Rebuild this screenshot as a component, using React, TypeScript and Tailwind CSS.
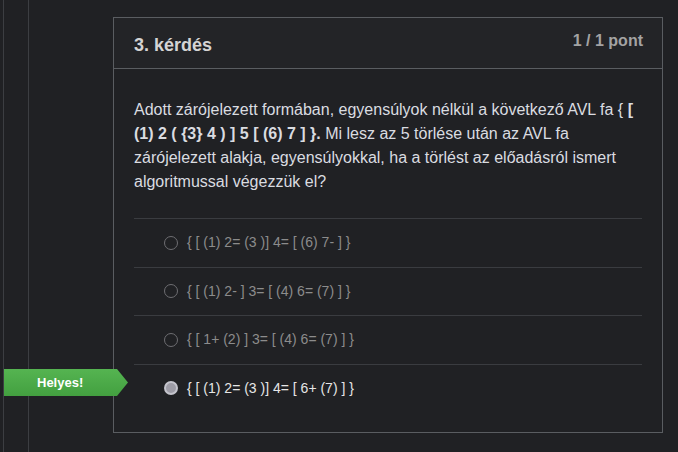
import React from "react";

const options = [
  { text: "{ [ (1) 2= (3 )] 4= [ (6) 7- ] }", selected: false },
  { text: "{ [ (1) 2- ] 3= [ (4) 6= (7) ] }", selected: false },
  { text: "{ [ 1+ (2) ] 3= [ (4) 6= (7) ] }", selected: false },
  { text: "{ [ (1) 2= (3 )] 4= [ 6+ (7) ] }", selected: true },
];

export default function App() {
  return (
    <div
      className="relative h-[452px] w-[678px] overflow-hidden bg-[#202124] flex"
      style={{ fontFamily: '"Liberation Sans", Arial, sans-serif' }}
    >
      <div className="w-[3px] shrink-0" />
      <div className="w-[25px] shrink-0 border-l border-[#3c3e42]" />
      <div className="flex-1 border-l border-[#3c3e42] pl-[84px] pt-[17px]">
        <div className="w-[550px] h-[416px] border border-[#5a5d61] flex flex-col">
          <div className="h-[51px] shrink-0 bg-[#232427] border-b border-[#5a5d61] flex items-center justify-between pl-[20px] pr-[19px]">
            <div className="text-[18px] font-bold text-[#d4d4d4] pt-[4px]">3. kérdés</div>
            <div className="text-[16px] font-bold text-[#a3a3a3] -mt-[4px]">1 / 1 pont</div>
          </div>
          <div className="flex-1 px-[20px] pt-[29px]">
            <p className="text-[16px] leading-[24px] text-[#dadce0] w-[510px]">
              Adott zárójelezett formában, egyensúlyok nélkül a következő AVL fa {"{ "}
              <b>[ (1) 2 ( {"{3}"} 4 ) ] 5 [ (6) 7 ] {"}"}.</b> Mi lesz az 5 törlése után az AVL fa
              zárójelezett alakja, egyensúlyokkal, ha a törlést az előadásról ismert algoritmussal
              végezzük el?
            </p>
            <div className="mt-[24px] w-[508px]">
              {options.map((o, i) => (
                <div
                  key={i}
                  className="relative h-[48.5px] border-t border-[#3a3c40] flex items-center pl-[30px]"
                >
                  {o.selected ? (
                    <span className="w-[14px] h-[14px] rounded-full bg-[#9d9ca6] border-2 border-[#c4c4cc] shrink-0" />
                  ) : (
                    <span className="w-[14px] h-[14px] rounded-full border border-[#6e6e72] shrink-0" />
                  )}
                  <span
                    className={
                      "ml-[9px] text-[14px] " +
                      (o.selected ? "text-[#e6e6e6]" : "text-[#8c8c8c]")
                    }
                  >
                    {o.text}
                  </span>
                </div>
              ))}
            </div>
          </div>
        </div>
      </div>
      <div
        className="absolute left-[4px] top-[369px] w-[124px] h-[27px] bg-gradient-to-b from-[#55b451] to-[#43a040] flex items-center pl-[33px] text-[13px] font-bold text-white"
        style={{ clipPath: "polygon(0 0, 113px 0, 124px 50%, 113px 100%, 0 100%)" }}
      >
        Helyes!
      </div>
    </div>
  );
}
